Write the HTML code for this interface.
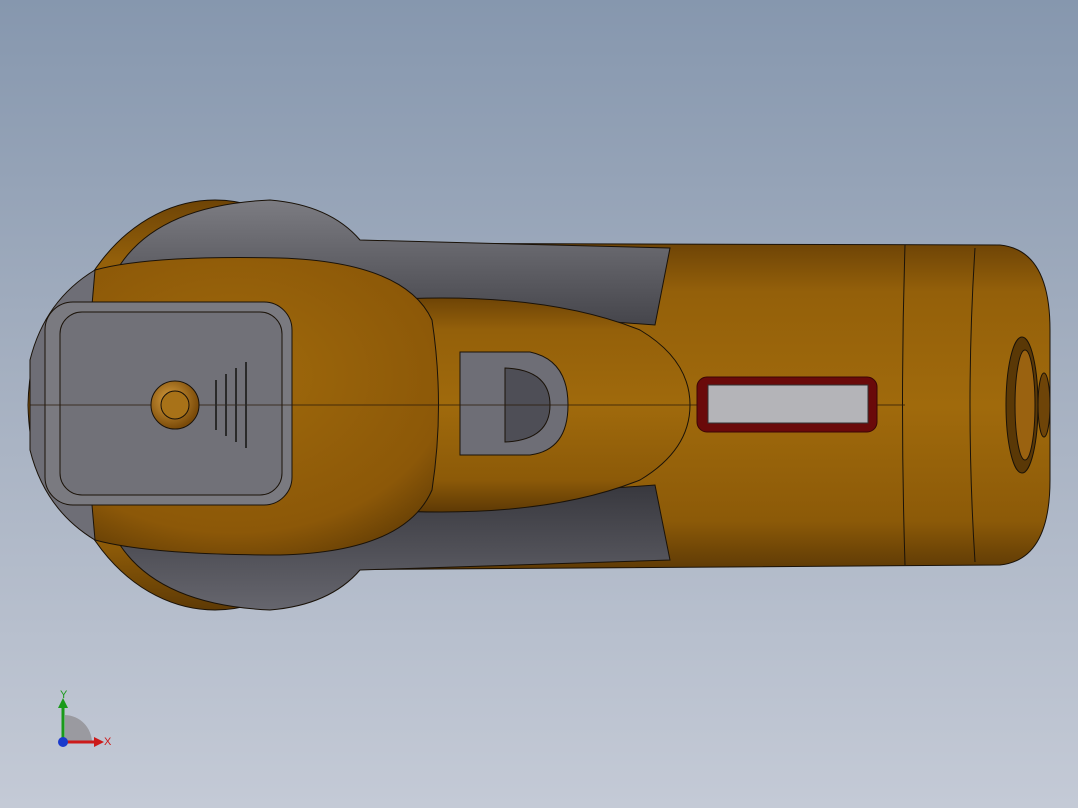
<!DOCTYPE html>
<html><head><style>
html,body{margin:0;padding:0;width:1078px;height:808px;overflow:hidden}
body{background:linear-gradient(180deg,#8697ae 0%,#a4afc0 45%,#c4cad6 100%)}
</style></head><body>
<svg width="1078" height="808" viewBox="0 0 1078 808" xmlns="http://www.w3.org/2000/svg">
<defs>
<linearGradient id="body" x1="0" y1="0" x2="0" y2="1">
<stop offset="0" stop-color="#6e4406"/><stop offset="0.15" stop-color="#94600a"/><stop offset="0.5" stop-color="#a06a0c"/><stop offset="0.85" stop-color="#8c5a08"/><stop offset="1" stop-color="#5e3a05"/></linearGradient>
<linearGradient id="grey" x1="0" y1="0" x2="0" y2="1">
<stop offset="0" stop-color="#7c7c82"/><stop offset="1" stop-color="#45454b"/></linearGradient>
<linearGradient id="grey2" x1="0" y1="0" x2="0" y2="1">
<stop offset="0" stop-color="#38383e"/><stop offset="1" stop-color="#66666e"/></linearGradient>
<radialGradient id="face" cx="0.5" cy="0.4" r="0.7">
<stop offset="0" stop-color="#a06a0c"/><stop offset="0.75" stop-color="#8c5808"/><stop offset="1" stop-color="#5e3a05"/></radialGradient>
<radialGradient id="brass" cx="0.4" cy="0.4" r="0.6">
<stop offset="0" stop-color="#d9a040"/><stop offset="1" stop-color="#7a4a08"/></radialGradient>
</defs>
<g stroke="#1a1208" stroke-width="1">
<path d="M300 243 L1000 245 Q1050 250 1050 330 L1050 480 Q1050 560 1000 565 L300 570 Z" fill="url(#body)"/>
<path d="M905 245 Q900 405 905 565" fill="none"/>
<path d="M975 248 Q965 405 975 562" fill="none"/>
<ellipse cx="215" cy="405" rx="160" ry="205" fill="url(#body)"/>
<path d="M120 265 Q160 205 270 200 Q330 205 360 240 L670 248 L655 325 L450 310 L300 260 Z" fill="url(#grey)"/>
<path d="M120 545 Q160 605 270 610 Q330 605 360 570 L670 560 L655 485 L450 500 L300 550 Z" fill="url(#grey2)"/>
<path d="M380 300 Q540 290 640 330 Q690 360 690 405 Q690 450 640 480 Q540 520 380 510 Z" fill="url(#body)"/>
<path d="M460 352 L530 352 Q568 360 568 405 Q568 450 530 455 L460 455 Z" fill="#6e6e76"/>
<path d="M505 368 Q550 370 550 405 Q550 440 505 442 Z" fill="#4e4e56"/>
<path d="M95 270 Q150 255 280 258 Q405 262 432 320 Q445 405 432 490 Q405 552 280 555 Q150 555 95 540 Q30 500 28 405 Q30 310 95 270 Z" fill="url(#face)"/>
<path d="M95 270 Q45 300 30 360 L30 450 Q45 510 95 540 L92 505 Q60 470 60 405 Q60 340 92 305 Z" fill="#6e6e76"/>
<rect x="45" y="302" width="247" height="203" rx="28" fill="#7a7a80"/>
<rect x="60" y="312" width="222" height="183" rx="22" fill="#717178"/>
<line x1="30" y1="405" x2="905" y2="405" stroke="#2a1a08" stroke-width="0.8"/>
<circle cx="175" cy="405" r="24" fill="url(#brass)"/>
<circle cx="175" cy="405" r="14" fill="#a87218"/>
<g stroke="#2a2a2a" stroke-width="2" fill="none">
<line x1="216" y1="380" x2="216" y2="430"/><line x1="226" y1="374" x2="226" y2="436"/>
<line x1="236" y1="368" x2="236" y2="442"/><line x1="246" y1="362" x2="246" y2="448"/></g>
<rect x="697" y="377" width="180" height="55" rx="10" fill="#6a0a0a" stroke="#3a0606"/>
<rect x="708" y="385" width="160" height="38" fill="#b4b4b8" stroke="#333"/>
<ellipse cx="1022" cy="405" rx="16" ry="68" fill="#5a3806"/>
<ellipse cx="1025" cy="405" rx="10" ry="55" fill="#9a6210"/>
<ellipse cx="1044" cy="405" rx="6" ry="32" fill="#6e4408"/>
</g>
<path d="M65 742 L65 715 A28 28 0 0 1 92 742 Z" fill="#9a9aa0"/>
<line x1="63" y1="742" x2="63" y2="706" stroke="#1a9a1a" stroke-width="3"/>
<polygon points="58,708 63,698 68,708" fill="#1a9a1a"/>
<line x1="63" y1="742" x2="96" y2="742" stroke="#cc1a1a" stroke-width="3"/>
<polygon points="94,737 104,742 94,747" fill="#cc1a1a"/>
<circle cx="63" cy="742" r="5" fill="#1a3acc"/>
<text x="60" y="698" font-family="Liberation Sans,sans-serif" font-size="11" fill="#1a9a1a">Y</text>
<text x="104" y="745" font-family="Liberation Sans,sans-serif" font-size="11" fill="#cc1a1a">X</text>
</svg>
</body></html>
